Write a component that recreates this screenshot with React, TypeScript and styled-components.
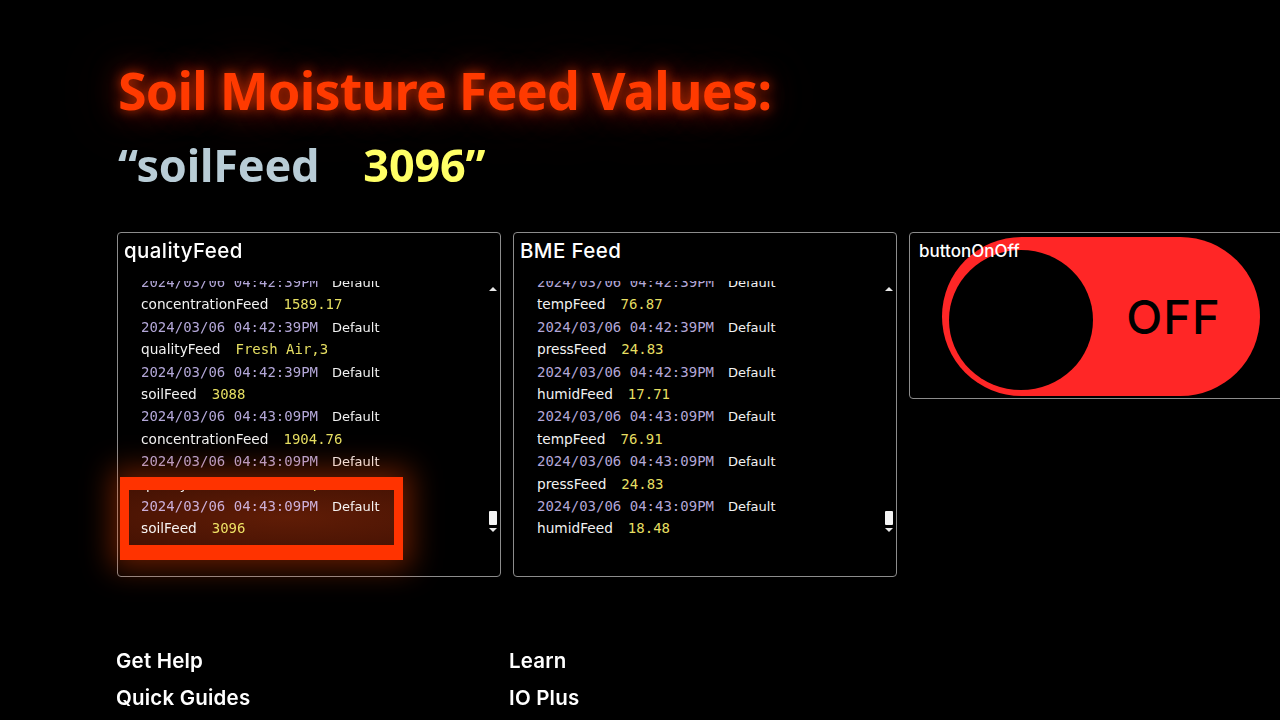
import React from "react";
import styled, { createGlobalStyle } from "styled-components";

const Global = createGlobalStyle`
  html, body { margin: 0; padding: 0; background: #000; }
  body { overflow: hidden; width: 1280px; height: 720px; }
  #root { width: 1280px; height: 720px; }
`;

const Page = styled.div`
  box-sizing: border-box;
  width: 1280px;
  height: 720px;
  background: #000;
  padding: 58px 0 0 116px;
  overflow: hidden;
`;

const Title = styled.h1`
  margin: 0 0 0 2px;
  font-family: "Noto Sans", "Open Sans", sans-serif;
  font-weight: 700;
  font-size: 52px;
  letter-spacing: -0.8px;
  line-height: 64px;
  color: #ff3a00;
  white-space: nowrap;
  text-shadow: 0 0 12px rgba(255, 60, 0, 0.7), 0 0 30px rgba(230, 50, 0, 0.55),
    0 0 60px rgba(200, 40, 0, 0.45);
`;

const Subtitle = styled.div`
  margin: 15px 0 0 2px;
  font-family: "Noto Sans", "Open Sans", sans-serif;
  font-weight: 700;
  font-size: 45px;
  letter-spacing: -0.2px;
  line-height: 56px;
  color: #b8ccd6;
  white-space: nowrap;
`;

const Yellow = styled.span`
  color: #ffff66;
  margin-left: 44px;
`;

const PanelRow = styled.div`
  display: flex;
  align-items: flex-start;
  margin-top: 39px;
  margin-left: 1px;
`;

const Panel = styled.div<{ $w: number; $h: number; $gap: number }>`
  position: relative;
  box-sizing: border-box;
  flex: none;
  width: ${(p) => p.$w}px;
  height: ${(p) => p.$h}px;
  margin-right: ${(p) => p.$gap}px;
  border: 1px solid #8c8c8c;
  border-radius: 4px;
  background: #000;
  display: flex;
  flex-direction: column;
`;

const PanelTitle = styled.div`
  padding: 6px 0 0 6px;
  font-family: Inter, "Noto Sans", sans-serif;
  font-weight: 500;
  font-size: 20.5px;
  letter-spacing: 0.4px;
  line-height: 24px;
  color: #fff;
  white-space: nowrap;
`;

const FeedBody = styled.div`
  display: flex;
  margin-top: 18px;
  padding: 0 2px 0 23px;
  height: 259px;
`;

const Viewport = styled.div`
  flex: 1;
  overflow: hidden;
`;

const Lines = styled.div`
  margin-top: -10px;
`;

const Line = styled.div`
  display: flex;
  align-items: baseline;
  height: 22.4px;
  line-height: 22.4px;
  white-space: nowrap;
`;

const Stamp = styled.span`
  font-family: "DejaVu Sans Mono", "Liberation Mono", monospace;
  font-size: 14px;
  color: #b3a7d8;
  margin-right: 14px;
`;

const Plain = styled.span`
  font-family: "DejaVu Sans", Verdana, sans-serif;
  font-size: 13px;
  color: #f2f2f2;
`;

const Name = styled.span`
  font-family: "DejaVu Sans", Verdana, sans-serif;
  font-size: 13.7px;
  color: #f2f2f2;
  margin-right: 15px;
`;

const Value = styled.span`
  font-family: "DejaVu Sans Mono", "Liberation Mono", monospace;
  font-size: 14px;
  color: #e6df62;
`;

const Track = styled.div`
  width: 11px;
  display: flex;
  flex-direction: column;
  align-items: center;
`;

const Arrow = styled.div<{ $down?: boolean }>`
  width: 0;
  height: 0;
  border-left: 4px solid transparent;
  border-right: 4px solid transparent;
  ${(p) =>
    p.$down
      ? "border-top: 4px solid #e8e8e8; margin-top: 3px;"
      : "border-bottom: 4px solid #e8e8e8; margin-top: 6px;"}
`;

const Spacer = styled.div`
  flex: 1;
`;

const Thumb = styled.div`
  width: 8px;
  height: 14px;
  background: #f4f4f4;
  border-radius: 1px;
`;

const TrackEnd = styled.div`
  height: 8px;
`;

const Highlight = styled.div`
  position: absolute;
  left: 2px;
  top: 244px;
  width: 283px;
  height: 83px;
  box-sizing: border-box;
  border-style: solid;
  border-color: #ff3300;
  border-width: 13px 9px 15px 9px;
  box-shadow: 0 0 28px 8px rgba(255, 70, 0, 0.4);
  pointer-events: none;

  &::before {
    content: "";
    position: absolute;
    inset: 0;
    background: radial-gradient(ellipse at 60% 50%, rgba(95, 28, 6, 1), rgba(70, 18, 3, 1));
    mix-blend-mode: screen;
  }
`;

const ToggleLabel = styled.div`
  position: absolute;
  left: 9px;
  top: 6px;
  z-index: 2;
  font-family: Inter, "Noto Sans", sans-serif;
  font-weight: 500;
  font-size: 17px;
  line-height: 24px;
  color: #fff;
`;

const ToggleArea = styled.div`
  flex: 1;
  display: flex;
  align-items: center;
  padding-left: 32px;
`;

const Pill = styled.div`
  width: 318px;
  height: 159px;
  border-radius: 80px;
  background: #ff2626;
  display: flex;
  align-items: center;
  padding-left: 7px;
  box-sizing: border-box;
  margin-top: 2px;
`;

const Knob = styled.div`
  width: 144px;
  height: 140px;
  border-radius: 50%;
  background: #000;
  flex: none;
  margin-top: 6px;
`;

const PillText = styled.div`
  flex: 1;
  text-align: center;
  font-family: Inter, "Noto Sans", sans-serif;
  font-weight: 500;
  font-size: 47px;
  color: #000;
  letter-spacing: 1px;
  padding-right: 6px;
`;

const Footer = styled.div`
  display: grid;
  grid-template-columns: 393px auto;
  grid-auto-rows: 37px;
  margin-top: 66px;
`;

const FooterLink = styled.div`
  font-family: Inter, "Noto Sans", sans-serif;
  font-weight: 600;
  font-size: 20.5px;
  letter-spacing: 0.2px;
  line-height: 36px;
  color: #fff;
  white-space: nowrap;
`;

type Entry = { ts: string; name: string; value: string };

const quality: Entry[] = [
  { ts: "2024/03/06 04:42:39PM", name: "concentrationFeed", value: "1589.17" },
  { ts: "2024/03/06 04:42:39PM", name: "qualityFeed", value: "Fresh Air,3" },
  { ts: "2024/03/06 04:42:39PM", name: "soilFeed", value: "3088" },
  { ts: "2024/03/06 04:43:09PM", name: "concentrationFeed", value: "1904.76" },
  { ts: "2024/03/06 04:43:09PM", name: "qualityFeed", value: "Fresh Air,3" },
  { ts: "2024/03/06 04:43:09PM", name: "soilFeed", value: "3096" },
];

const bme: Entry[] = [
  { ts: "2024/03/06 04:42:39PM", name: "tempFeed", value: "76.87" },
  { ts: "2024/03/06 04:42:39PM", name: "pressFeed", value: "24.83" },
  { ts: "2024/03/06 04:42:39PM", name: "humidFeed", value: "17.71" },
  { ts: "2024/03/06 04:43:09PM", name: "tempFeed", value: "76.91" },
  { ts: "2024/03/06 04:43:09PM", name: "pressFeed", value: "24.83" },
  { ts: "2024/03/06 04:43:09PM", name: "humidFeed", value: "18.48" },
];

function Feed({ title, entries, children }: { title: string; entries: Entry[]; children?: React.ReactNode }) {
  return (
    <Panel $w={384} $h={345} $gap={12}>
      <PanelTitle>{title}</PanelTitle>
      <FeedBody>
        <Viewport>
          <Lines>
            {entries.map((e, i) => (
              <React.Fragment key={i}>
                <Line>
                  <Stamp>{e.ts}</Stamp>
                  <Plain>Default</Plain>
                </Line>
                <Line>
                  <Name>{e.name}</Name>
                  <Value>{e.value}</Value>
                </Line>
              </React.Fragment>
            ))}
          </Lines>
        </Viewport>
        <Track>
          <Arrow />
          <Spacer />
          <Thumb />
          <Arrow $down />
          <TrackEnd />
        </Track>
      </FeedBody>
      {children}
    </Panel>
  );
}

export default function App() {
  return (
    <Page>
      <Global />
      <Title>Soil Moisture Feed Values:</Title>
      <Subtitle>
        “soilFeed<Yellow>3096”</Yellow>
      </Subtitle>
      <PanelRow>
        <Feed title="qualityFeed" entries={quality}>
          <Highlight />
        </Feed>
        <Feed title="BME Feed" entries={bme} />
        <Panel $w={390} $h={167} $gap={0}>
          <ToggleLabel>buttonOnOff</ToggleLabel>
          <ToggleArea>
            <Pill>
              <Knob />
              <PillText>OFF</PillText>
            </Pill>
          </ToggleArea>
        </Panel>
      </PanelRow>
      <Footer>
        <FooterLink>Get Help</FooterLink>
        <FooterLink>Learn</FooterLink>
        <FooterLink>Quick Guides</FooterLink>
        <FooterLink>IO Plus</FooterLink>
      </Footer>
    </Page>
  );
}
